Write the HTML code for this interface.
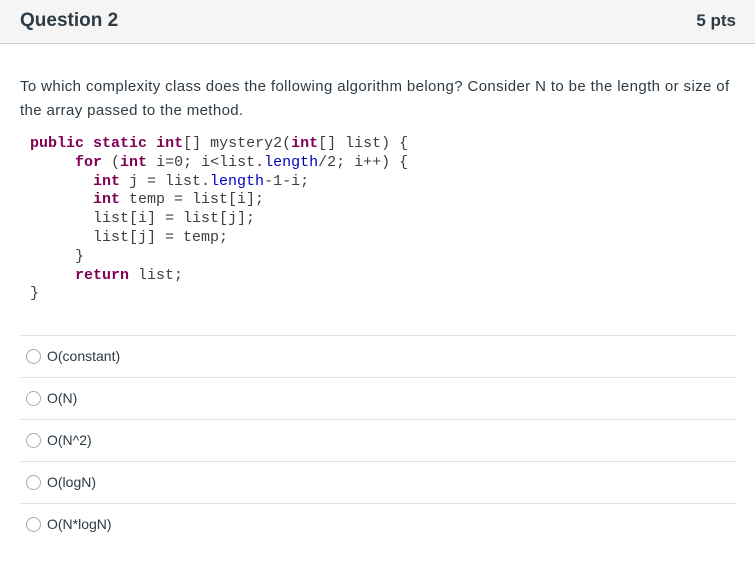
<!DOCTYPE html>
<html><head><style>
body{margin:0;width:755px;height:564px;background:#fff;font-family:"Liberation Sans",sans-serif;color:#2d3b45;overflow:hidden;position:relative}
.hdr{position:absolute;left:0;top:0;width:755px;height:43px;background:#f5f5f5;border-bottom:1px solid #c7cdd1}
.hdr .t{position:absolute;left:20px;top:10px;font-size:19px;font-weight:bold;color:#2d3b45}
.hdr .p{position:absolute;right:19px;top:11px;font-size:17px;font-weight:bold;color:#2d3b45}
.q{position:absolute;left:20px;top:75px;width:735px;font-size:15px;line-height:24px;color:#2d3b45;white-space:nowrap;letter-spacing:0.38px}
pre{position:absolute;left:30px;top:135px;margin:0;font-family:"Liberation Mono",monospace;font-size:15px;line-height:18.8px;color:#3f3f3f}
b{color:#7f0055}
.f{color:#0000c0}
.ans{position:absolute;left:20px;width:716px;height:42px;border-top:1px solid #dfe2e4}
.ans .r{position:absolute;left:6px;top:13px;width:13px;height:13px;border:1px solid #aaa;border-radius:50%;background:#fff}
.ans .l{position:absolute;left:27px;top:12px;font-size:14px;color:#2d3b45}
</style></head><body>
<div class="hdr"><div class="t">Question 2</div><div class="p">5 pts</div></div>
<div class="q">To which complexity class does the following algorithm belong? Consider N to be the length or size of<br>the array passed to the method.</div>
<pre><b>public</b> <b>static</b> <b>int</b>[] mystery2(<b>int</b>[] list) {
     <b>for</b> (<b>int</b> i=0; i&lt;list.<span class="f">length</span>/2; i++) {
       <b>int</b> j = list.<span class="f">length</span>-1-i;
       <b>int</b> temp = list[i];
       list[i] = list[j];
       list[j] = temp;
     }
     <b>return</b> list;
}</pre>
<div class="ans" style="top:335px"><div class="r"></div><div class="l">O(constant)</div></div>
<div class="ans" style="top:377px"><div class="r"></div><div class="l">O(N)</div></div>
<div class="ans" style="top:419px"><div class="r"></div><div class="l">O(N^2)</div></div>
<div class="ans" style="top:461px"><div class="r"></div><div class="l">O(logN)</div></div>
<div class="ans" style="top:503px"><div class="r"></div><div class="l">O(N*logN)</div></div>
</body></html>
